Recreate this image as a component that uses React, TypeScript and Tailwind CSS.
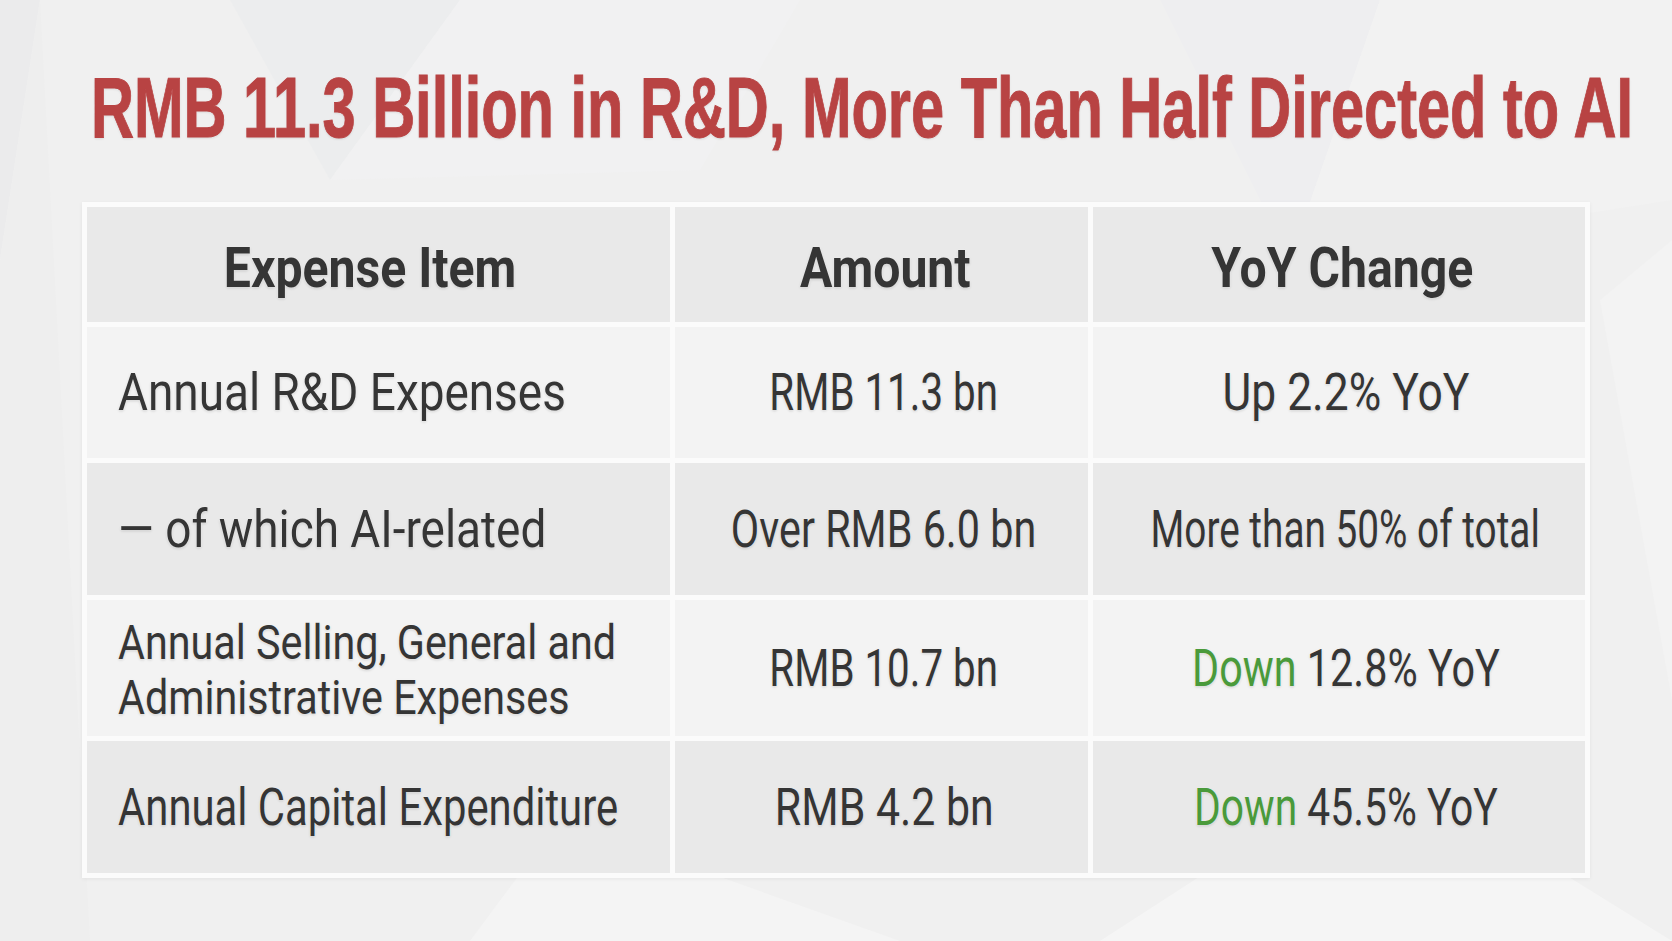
import React from "react";

const dark = "text-[#353535]";
const glow = "[text-shadow:0_0_2px_#ffffff,0_1px_3px_rgba(0,0,0,0.18)]";

function Cell({
  bg,
  align = "center",
  pad = "",
  children,
}: {
  bg: string;
  align?: "center" | "left";
  pad?: string;
  children: React.ReactNode;
}) {
  return (
    <div
      className={`${bg} flex items-center ${
        align === "center" ? "justify-center" : "justify-start pl-[31px]"
      } ${pad}`}
    >
      {children}
    </div>
  );
}

function T({
  children,
  left = false,
  bold = false,
  sx = "scale-x-[0.82]",
}: {
  children: React.ReactNode;
  left?: boolean;
  bold?: boolean;
  sx?: string;
}) {
  return (
    <span
      className={`inline-block whitespace-nowrap leading-none ${
        bold
          ? "text-[56px] font-bold scale-x-[0.86] pt-[6px]"
          : `text-[51px] font-normal ${sx}`
      } ${dark} ${glow} ${left ? "origin-left" : "origin-center"}`}
    >
      {children}
    </span>
  );
}

const Down = () => <span className="text-[#4a9a3b]">Down</span>;

export default function App() {
  const light = "bg-[#f3f3f3]";
  const mid = "bg-[#e9e9e9]";
  const c2 = "pl-[5px]";
  const c3 = "pl-[13px]";
  return (
    <div
      className="relative w-[1672px] h-[941px] overflow-hidden bg-[#f0f0f0]"
      style={{ fontFamily: "Roboto, 'Liberation Sans', sans-serif" }}
    >
      <svg
        className="absolute inset-0"
        width="1672"
        height="941"
        viewBox="0 0 1672 941"
      >
        <polygon points="0,0 40,0 0,260" fill="#ebebec" />
        <polygon points="0,260 40,0 90,941 0,941" fill="#eeeeee" />
        <polygon points="230,0 330,180 460,0" fill="#ecedee" />
        <polygon points="460,0 330,180 700,170 800,0" fill="#f1f1f2" />
        <polygon points="1160,0 1290,260 1380,0" fill="#eeeef0" />
        <polygon points="1380,0 1290,260 1672,200 1672,0" fill="#f2f2f2" />
        <polygon points="1100,941 1380,760 1672,941" fill="#f5f5f5" />
        <polygon points="470,941 560,820 900,941" fill="#f4f4f4" />
        <polygon points="1600,300 1672,240 1672,700" fill="#f3f3f3" />
      </svg>

      <div className="relative flex flex-col">
        <div className="pt-[64px] pl-[91px] h-[148px]">
          <span
            className="inline-block whitespace-nowrap origin-left scale-x-[0.692] text-[86px] leading-[86px] font-bold text-[#b84343] [-webkit-text-stroke:1px_#b84343] [text-shadow:0_0_2px_#ffffff,0_1px_3px_rgba(0,0,0,0.15)]"
            style={{ fontFamily: "'Liberation Sans', Arial, sans-serif" }}
          >
            RMB 11.3 Billion in R&amp;D, More Than Half Directed to AI
          </span>
        </div>

        <div className="mt-[54px] ml-[82px] w-fit grid grid-cols-[583px_413px_492px] grid-rows-[115px_131px_132px_136px_132px] gap-[5px] p-[5px] bg-[#fbfbfb] shadow-[0_1px_4px_rgba(0,0,0,0.06)]">
          <Cell bg={mid} pad="pr-[16px]">
            <T bold>Expense Item</T>
          </Cell>
          <Cell bg={mid} pad="pl-[8px]">
            <T bold>Amount</T>
          </Cell>
          <Cell bg={mid} pad="pl-[6px]">
            <T bold>YoY Change</T>
          </Cell>

          <Cell bg={light} align="left">
            <T left sx="scale-x-[0.9]">
              Annual R&amp;D Expenses
            </T>
          </Cell>
          <Cell bg={light} pad={c2}>
            <T sx="scale-x-[0.79]">RMB 11.3 bn</T>
          </Cell>
          <Cell bg={light} pad={c3}>
            <T sx="scale-x-[0.87]">Up 2.2% YoY</T>
          </Cell>

          <Cell bg={mid} align="left">
            <T left sx="scale-x-[0.9]">
              — of which AI-related
            </T>
          </Cell>
          <Cell bg={mid} pad={c2}>
            <T sx="scale-x-[0.81]">Over RMB 6.0 bn</T>
          </Cell>
          <Cell bg={mid} pad={c3}>
            <T sx="scale-x-[0.76]">More than 50% of total</T>
          </Cell>

          <Cell bg={light} align="left">
            <span
              className={`inline-block origin-left scale-x-[0.86] whitespace-nowrap text-[48px] leading-[55px] pt-[4px] ${dark} ${glow}`}
            >
              Annual Selling, General and
              <br />
              Administrative Expenses
            </span>
          </Cell>
          <Cell bg={light} pad={c2}>
            <T sx="scale-x-[0.79]">RMB 10.7 bn</T>
          </Cell>
          <Cell bg={light} pad={c3}>
            <T sx="scale-x-[0.81]">
              <Down /> 12.8% YoY
            </T>
          </Cell>

          <Cell bg={mid} align="left">
            <T left sx="scale-x-[0.82]">
              Annual Capital Expenditure
            </T>
          </Cell>
          <Cell bg={mid} pad={c2}>
            <T sx="scale-x-[0.84]">RMB 4.2 bn</T>
          </Cell>
          <Cell bg={mid} pad={c3}>
            <T sx="scale-x-[0.8]">
              <Down /> 45.5% YoY
            </T>
          </Cell>
        </div>
      </div>
    </div>
  );
}
